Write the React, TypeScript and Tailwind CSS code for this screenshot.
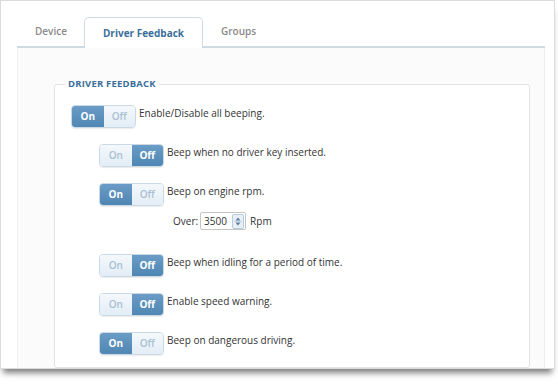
import React from 'react'

const font = { fontFamily: '"Open Sans", "Noto Sans", sans-serif' }

const Toggle: React.FC<{ on: boolean }> = ({ on }) => {
    const active = 'bg-gradient-to-b from-[#6a9cc6] to-[#4f86b3] text-white font-bold'
    const idle = 'bg-gradient-to-b from-[#f4f8fb] to-[#e3edf6] text-[#a9bfd2] font-semibold'
    return (
        <div className="flex h-[23px] w-[65px] shrink-0 rounded-[4px] border border-[#c9d9e6] overflow-hidden shadow-[0_1px_1px_rgba(0,0,0,0.08)] text-[10px]">
            <div className={`flex flex-1 items-center justify-center ${on ? active : idle}`}>On</div>
            <div className={`flex flex-1 items-center justify-center ${on ? idle : active}`}>Off</div>
        </div>
    )
}

const Row: React.FC<{ on: boolean; label: string; indent?: boolean; children?: React.ReactNode }> = ({ on, label, indent, children }) => (
    <div className={indent ? 'pl-[28px]' : ''}>
        <div className="flex items-start gap-[3px]">
            <Toggle on={on} />
            <span className="text-[10px] leading-[14px] text-[#333] pt-[1px]">{label}</span>
        </div>
        {children}
    </div>
)

export default function App() {
    return (
        <div className="w-[558px] h-[385px] bg-white" style={font}>
            <div className="w-[555px] h-[369px] border border-[#dcdcdc] bg-white shadow-[0_7px_6px_-3px_rgba(0,0,0,0.5)] pl-[16px] pr-[9px] pt-[17px] flex flex-col">
                <div className="flex items-end h-[30px] border-b-2 border-[#cfdbe3] pl-[18px] text-[10px] font-semibold">
                    <div className="w-[49px] pb-[7px] text-[#8a8a8a]">Device</div>
                    <div className="w-[119px] h-[31px] -mb-[2px] flex items-center justify-center pt-[1px] bg-white border border-b-0 border-[#cfdbe3] rounded-t-[5px] text-[#3b6f9b] font-bold">Driver Feedback</div>
                    <div className="pl-[18px] pb-[7px] text-[#8a8a8a]">Groups</div>
                </div>
                <div className="flex-1 bg-[#fbfbfb] border-l border-r border-[#eeeeee] pl-[36px] pr-[14px] pt-[29px]">
                    <fieldset className="h-full border border-[#e2e2e2] rounded-[3px] bg-white min-w-0">
                        <legend className="ml-[10px] px-[3px] text-[9.5px] font-bold text-[#3b6f9b] tracking-[0.2px]">DRIVER FEEDBACK</legend>
                        <div className="flex flex-col gap-[16px] pl-[16px] pt-[14px]">
                            <Row on label="Enable/Disable all beeping." />
                            <Row on={false} indent label="Beep when no driver key inserted." />
                            <Row on indent label="Beep on engine rpm.">
                                <div className="flex items-center pl-[74px] pt-[6px] text-[10px] text-[#333] gap-[2px]">
                                    <span>Over:</span>
                                    <div className="flex items-center w-[46px] h-[18px] border border-[#c5c5c5] rounded-[2px] bg-white">
                                        <span className="flex-1 pl-[3px] leading-none">3500</span>
                                        <div className="flex flex-col w-[12px] h-[15px] mr-[1px] rounded-[2px] border border-[#b9cbdb] bg-[#e8f0f7]">
                                            <svg viewBox="0 0 10 12" className="w-full h-full">
                                                <path d="M2.5 5 L5 2 L7.5 5 Z" fill="#5b7ea0" />
                                                <path d="M1 6 H9" stroke="#b9cbdb" strokeWidth="0.8" />
                                                <path d="M2.5 7 L5 10 L7.5 7 Z" fill="#5b7ea0" />
                                            </svg>
                                        </div>
                                    </div>
                                    <span className="ml-[2px]">Rpm</span>
                                </div>
                            </Row>
                            <div className="pt-[8px]">
                                <Row on={false} indent label="Beep when idling for a period of time." />
                            </div>
                            <Row on={false} indent label="Enable speed warning." />
                            <Row on indent label="Beep on dangerous driving." />
                        </div>
                    </fieldset>
                </div>
            </div>
        </div>
    )
}
